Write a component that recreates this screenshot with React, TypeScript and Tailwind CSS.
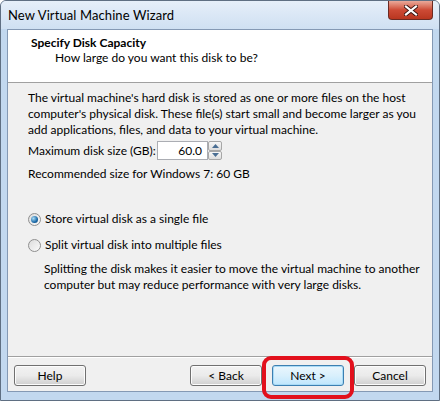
import React from 'react'

function Radio({ checked }: { checked?: boolean }) {
    return (
        <span className="relative inline-flex w-[13px] h-[13px] rounded-full border border-[#8f8f8f] bg-gradient-to-br from-[#dcdcdc] to-[#fbfbfb] items-center justify-center shrink-0">
            {checked && (
                <span className="w-[7px] h-[7px] rounded-full bg-[radial-gradient(circle_at_35%_35%,#a9dcf6,#1c6aa8_60%,#0d3f6e)]" />
            )}
        </span>
    )
}

function Btn({ children, focused }: { children: React.ReactNode; focused?: boolean }) {
    return (
        <button
            className={
                'w-[72px] h-[21px] rounded-[3px] border text-[12px] leading-none flex items-center justify-center text-black ' +
                (focused
                    ? 'border-[#3c7fb1] bg-gradient-to-b from-[#eaf6fd] via-[#d9f0fc] to-[#bee6fd] shadow-[inset_0_0_0_1px_#a9dbf6]'
                    : 'border-[#707070] bg-gradient-to-b from-[#f2f2f2] via-[#ebebeb] to-[#cfcfcf] shadow-[inset_0_0_0_1px_#fcfcfc]')
            }
        >
            {children}
        </button>
    )
}

export default function App() {
    return (
        <div
            className="w-[440px] h-[401px] relative overflow-hidden bg-[#c2d8ef] border border-[#5f6f82] rounded-t-[6px] flex flex-col text-black whitespace-nowrap"
            style={{ fontFamily: 'Lato, "Noto Sans", sans-serif' }}
        >
            {/* Title bar */}
            <div className="h-[28px] shrink-0 flex items-start bg-gradient-to-b from-[#e6eff9] to-[#cfe0f2]">
                <span className="pl-[7px] pt-[6px] text-[13px] leading-[16px] tracking-[0.1px]">New Virtual Machine Wizard</span>
                <div className="ml-auto mr-[6px] w-[45px] h-[19px] rounded-b-[4px] border border-t-0 border-[#6b2a22] bg-gradient-to-b from-[#e9a99a] via-[#cd4a35] to-[#b9361f] flex items-center justify-center">
                    <svg width="14" height="11" viewBox="0 0 14 11">
                        <path d="M2 1.5 L12 9.5 M12 1.5 L2 9.5" stroke="#3a1410" strokeWidth="4" strokeLinecap="square" />
                        <path d="M2 1.5 L12 9.5 M12 1.5 L2 9.5" stroke="#ffffff" strokeWidth="2.2" strokeLinecap="square" />
                    </svg>
                </div>
            </div>

            {/* Client area */}
            <div className="mx-[6px] flex-1 flex flex-col border border-[#8499b4] bg-[#f0f0f0] text-[12px] leading-[16px]">
                {/* Header */}
                <div className="h-[53px] shrink-0 bg-white border-b border-[#a0a0a0] pl-[23px] pt-[5px]">
                    <div className="font-bold">Specify Disk Capacity</div>
                    <div className="pl-[24px] -mt-[1px]">How large do you want this disk to be?</div>
                </div>

                {/* Body */}
                <div className="flex-1 pl-[20px] pt-[7px]">
                    <p>
                        The virtual machine's hard disk is stored as one or more files on the host
                        <br />
                        computer's physical disk. These file(s) start small and become larger as you
                        <br />
                        add applications, files, and data to your virtual machine.
                    </p>

                    <div className="flex items-center mt-[3px] h-[19px]">
                        <span className="w-[129px]">Maximum disk size (GB):</span>
                        <div className="w-[51px] h-[19px] bg-white border border-[#abadb3] flex items-center justify-end pr-[5px]">
                            60.0
                        </div>
                        <div className="flex flex-col w-[14px] h-[19px]">
                            <div className="flex-1 border border-[#a7a7a7] rounded-[2px] bg-gradient-to-b from-[#f7f7f7] to-[#dedede] flex items-center justify-center">
                                <svg width="7" height="4" viewBox="0 0 7 4">
                                    <path d="M0 4 L3.5 0 L7 4 Z" fill="#4a6e93" />
                                </svg>
                            </div>
                            <div className="flex-1 border border-[#a7a7a7] rounded-[2px] bg-gradient-to-b from-[#f7f7f7] to-[#dedede] flex items-center justify-center">
                                <svg width="7" height="4" viewBox="0 0 7 4">
                                    <path d="M0 0 L3.5 4 L7 0 Z" fill="#4a6e93" />
                                </svg>
                            </div>
                        </div>
                    </div>

                    <div className="mt-[6px]">Recommended size for Windows 7: 60 GB</div>

                    <div className="mt-[29px] flex items-center gap-[4px] h-[16px]">
                        <Radio checked />
                        <span>Store virtual disk as a single file</span>
                    </div>
                    <div className="mt-[10px] flex items-center gap-[4px] h-[16px]">
                        <Radio />
                        <span>Split virtual disk into multiple files</span>
                    </div>
                    <p className="pl-[16px] mt-[8px]">
                        Splitting the disk makes it easier to move the virtual machine to another
                        <br />
                        computer but may reduce performance with very large disks.
                    </p>
                </div>

                {/* Footer */}
                <div className="h-[35px] shrink-0 border-t border-[#a0a0a0] shadow-[inset_0_1px_0_#ffffff] flex items-start pt-[8px] px-[6px]">
                    <Btn>Help</Btn>
                    <div className="ml-auto flex gap-[10px]">
                        <Btn>&lt; Back</Btn>
                        <Btn focused>Next &gt;</Btn>
                        <Btn>Cancel</Btn>
                    </div>
                </div>
            </div>
            <div className="h-[8px] shrink-0" />

            {/* Red annotation around Next */}
            <div className="absolute left-[261px] top-[355px] w-[92px] h-[43px] rounded-[9px] border-[4px] border-[#e2101c]" />
        </div>
    )
}
